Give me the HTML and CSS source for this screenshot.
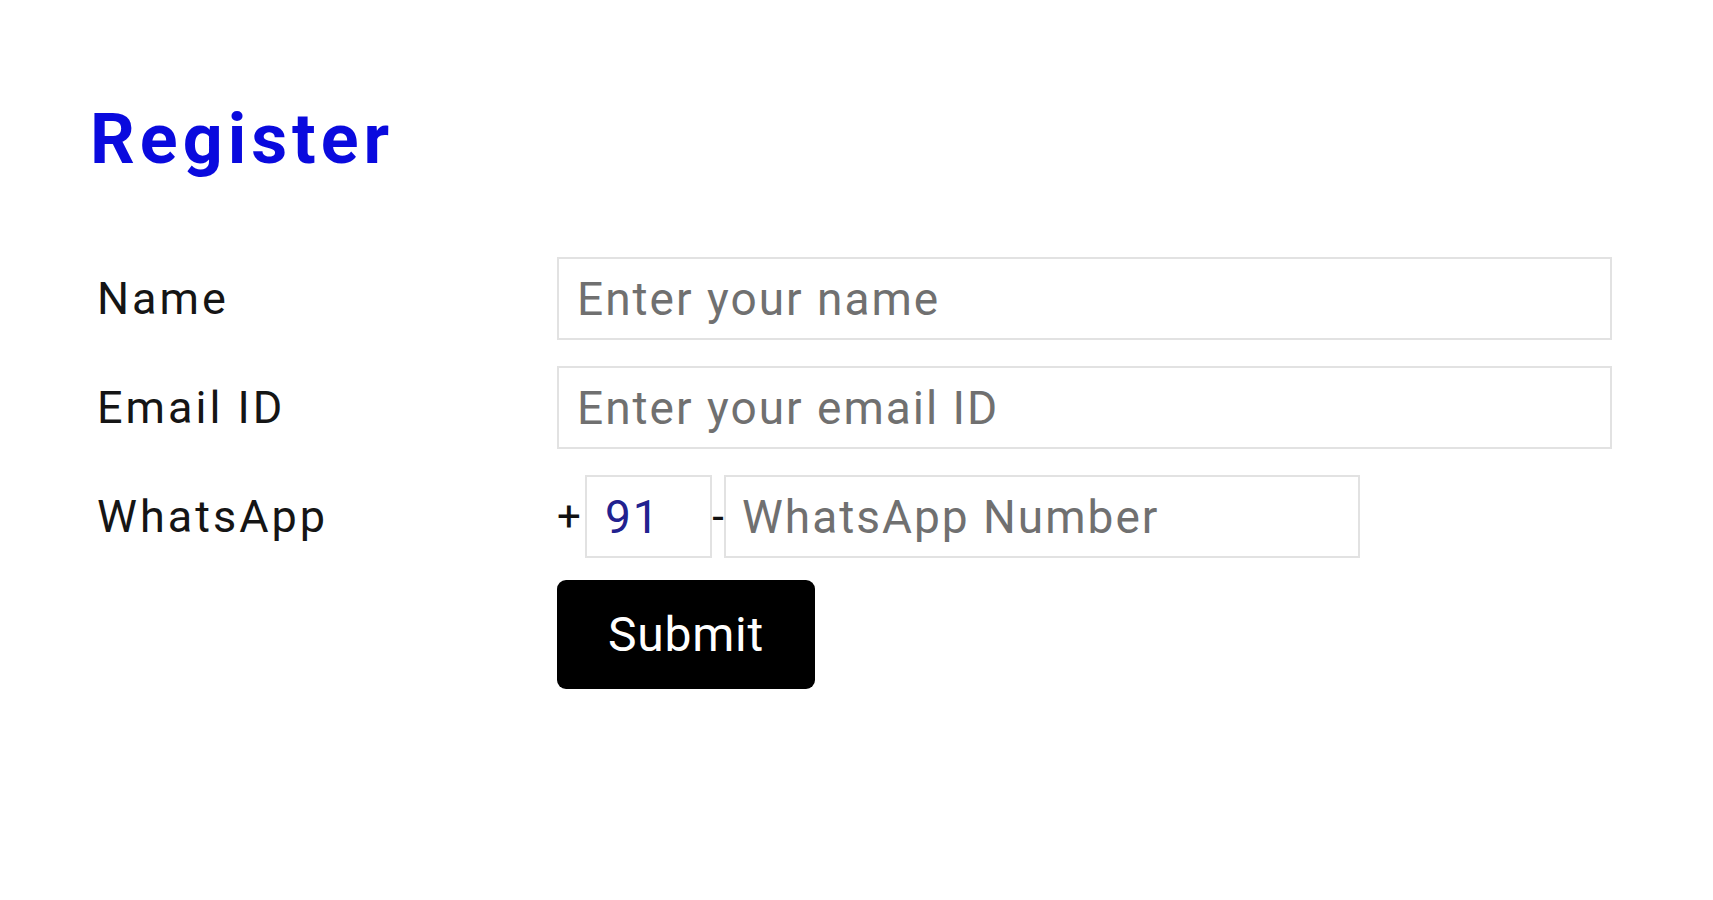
FILE: index.html
```html
<!DOCTYPE html>
<html lang="en">
<head>
<meta charset="utf-8">
<title>Register</title>
<link rel="stylesheet" href="styles.css">
</head>
<body>
<main class="page">
  <h1 class="title">Register</h1>
  <form class="form">
    <label class="label" for="name">Name</label>
    <input class="field field-wide" id="name" type="text" placeholder="Enter your name">

    <label class="label" for="email">Email ID</label>
    <input class="field field-wide" id="email" type="email" placeholder="Enter your email ID">

    <label class="label" for="phone">WhatsApp</label>
    <div class="phone">
      <span class="sep plus">+</span>
      <input class="field field-code" type="text" value="91">
      <span class="sep dash">-</span>
      <input class="field field-phone" id="phone" type="tel" placeholder="WhatsApp Number">
    </div>

    <span class="spacer"></span>
    <div class="actions">
      <button class="submit" type="button">Submit</button>
    </div>
  </form>
</main>
</body>
</html>
```

FILE: styles.css
```css
* { box-sizing: border-box; }

html, body {
  margin: 0;
  padding: 0;
  background: #ffffff;
}

body {
  font-family: Roboto, "Liberation Sans", Arial, sans-serif;
  color: #111111;
}

.page {
  padding: 104px 0 0 90px;
}

.title {
  margin: 0;
  font-size: 70px;
  line-height: 70px;
  font-weight: 700;
  letter-spacing: 5px;
  color: #0a0ade;
}

.form {
  margin-top: 83px;
  margin-left: 7px;
  display: grid;
  grid-template-columns: 460px auto;
  row-gap: 26px;
  align-items: center;
}

.label {
  font-size: 45px;
  line-height: 1;
  color: #151515;
  letter-spacing: 3px;
}

.field {
  height: 83px;
  border: 2px solid #e2e2e2;
  background: #ffffff;
  font-family: Roboto, "Liberation Sans", Arial, sans-serif;
  font-size: 46px;
  padding: 0 0 0 18px;
  color: #22228f;
  outline: none;
  letter-spacing: 2px;
}

.field::placeholder {
  color: #707070;
  opacity: 1;
}

.field-wide {
  width: 1055px;
}

.phone {
  display: flex;
  align-items: center;
}

.sep {
  font-size: 42px;
  color: #111111;
  line-height: 1;
}

.plus {
  width: 28px;
}

.field-code {
  width: 127px;
  padding-left: 18px;
}

.dash {
  width: 12px;
  text-align: center;
}

.field-phone {
  width: 636px;
  padding-left: 16px;
}

.actions {
  margin-top: -4px;
}

.submit {
  width: 258px;
  height: 109px;
  background: #000000;
  color: #ffffff;
  border: none;
  border-radius: 9px;
  font-family: Roboto, "Liberation Sans", Arial, sans-serif;
  font-size: 48px;
  letter-spacing: 0.8px;
  padding: 0;
}
```
